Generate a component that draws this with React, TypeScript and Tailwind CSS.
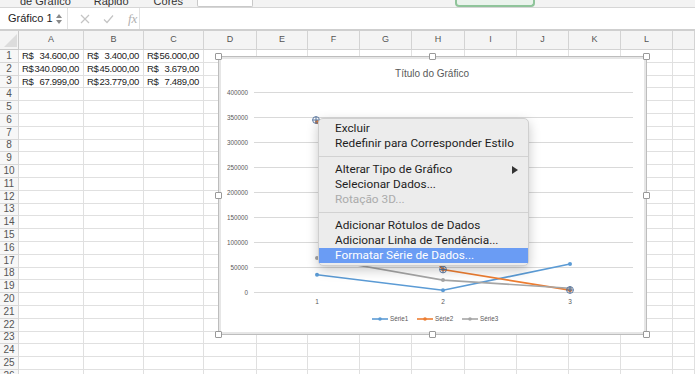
import React from "react";

const COLS = ["A", "B", "C", "D", "E", "F", "G", "H", "I", "J", "K", "L", ""];
const ROWS = Array.from({ length: 26 }, (_, i) => i + 1);
const DATA: Record<number, string[]> = {
    1: ["34.600,00", "3.400,00", "56.000,00"],
    2: ["340.090,00", "45.000,00", "3.679,00"],
    3: ["67.999,00", "23.779,00", "7.489,00"],
};

const XS = [317, 443, 570];
const toY = (v: number) => 292 - v / 2000;
const SERIES = [
    { name: "Série1", color: "#5b9bd5", values: [34600, 3400, 56000] },
    { name: "Série2", color: "#ed7d31", values: [340090, 45000, 3679] },
    { name: "Série3", color: "#a5a5a5", values: [67999, 23779, 7489] },
];

const Ribbon = () => (
    <div className="flex h-[8px] items-end overflow-hidden border-b border-[#d6d6d6] bg-[#f3f3f3] text-[11px] leading-[14px] text-[#333]">
        <span className="ml-[20px] -mb-[1px]">de Gráfico</span>
        <span className="ml-[23px] -mb-[1px]">Rápido</span>
        <span className="ml-[25px] -mb-[1px]">Cores</span>
        <div className="ml-[14px] h-[8px] w-[56px] rounded-b-[2px] border border-t-0 border-[#c9c9c9] bg-white" />
        <div className="ml-[202px] h-[8px] w-[80px] rounded-b-[4px] border-2 border-t-0 border-[#8fc49a] bg-[#eaf3ec]" />
    </div>
);

const FormulaBar = () => (
    <div className="flex h-[23px] items-center border-b-2 border-[#cfcfcf] bg-white">
        <div className="flex h-full w-[68px] items-center justify-between border-r border-[#e2e2e2] pl-[8px] pr-[5px]">
            <span className="text-[11px] text-[#222]">Gráfico 1</span>
            <div className="flex flex-col items-center gap-[2px]">
                <svg width="6" height="4" viewBox="0 0 6 4">
                    <path d="M3 0 L6 4 L0 4 Z" fill="#8a8a8a" />
                </svg>
                <svg width="6" height="4" viewBox="0 0 6 4">
                    <path d="M0 0 L6 0 L3 4 Z" fill="#8a8a8a" />
                </svg>
            </div>
        </div>
        <div className="flex h-full w-[72px] items-center border-r border-[#e2e2e2] pl-[12px]">
            <svg width="10" height="10" viewBox="0 0 10 10">
                <path d="M1 1 L9 9 M9 1 L1 9" stroke="#c4c4c4" strokeWidth="1.2" />
            </svg>
            <svg className="ml-[13px]" width="11" height="10" viewBox="0 0 11 10">
                <path d="M1 5.5 L4 8.5 L10 1.5" stroke="#c4c4c4" strokeWidth="1.2" fill="none" />
            </svg>
            <span className="ml-[14px] font-['Liberation_Serif',serif] text-[13px] italic text-[#b0b0b0]">
                fx
            </span>
        </div>
        <div className="h-full flex-1" />
    </div>
);

const Sheet = () => (
    <div className="grid grid-cols-[19px_65px_60px_60px_53px_51px_52px_52px_53px_52px_52px_52px_52px_22px] grid-rows-[19px] auto-rows-[12.8px] text-[#222]">
        <div className="relative border-b border-r border-[#c9c9c9] bg-[#f4f4f4]">
            <svg className="absolute bottom-[2px] right-[1px]" width="13" height="13" viewBox="0 0 13 13">
                <path d="M13 0 L13 13 L0 13 Z" fill="#dcdcdc" />
            </svg>
        </div>
        {COLS.map((c, i) => (
            <div
                key={"h" + i}
                className="flex items-center justify-center border-b border-r border-[#d3d3d3] bg-[#f4f4f4] text-[9px] text-[#555]"
            >
                {c}
            </div>
        ))}
        {ROWS.map((r) => (
            <React.Fragment key={r}>
                <div className="flex items-center justify-center border-b border-r border-[#d8d8d8] bg-[#f7f7f7] text-[10px] leading-none text-[#555]">
                    {r}
                </div>
                {COLS.map((_, i) => {
                    const value = DATA[r]?.[i];
                    return (
                        <div
                            key={i}
                            className="flex items-center justify-between overflow-hidden border-b border-r border-[#e0e0e0] pl-[3px] pr-[4px] text-[9.5px] leading-none tracking-[-0.3px] whitespace-nowrap"
                        >
                            {value && (
                                <>
                                    <span>R$</span>
                                    <span>{value}</span>
                                </>
                            )}
                        </div>
                    );
                })}
            </React.Fragment>
        ))}
    </div>
);

const SelMarker = ({ x, y }: { x: number; y: number }) => (
    <g stroke="#4f6f9c" strokeWidth="0.9" fill="none">
        <circle cx={x} cy={y} r="3.4" />
        <path d={`M${x - 3.4} ${y} H${x + 3.4} M${x} ${y - 3.4} V${y + 3.4}`} />
    </g>
);

const Chart = () => (
    <div className="absolute left-[218px] top-[56px] h-[279px] w-[429px] border border-[#bdbdbd] bg-white shadow-[inset_0_0_0_2px_#e6e6e6]">
        <svg className="absolute left-[-1px] top-[-1px]" width="429" height="279" viewBox="218 56 429 279">
            <text x="432" y="76.5" fontSize="10" fill="#595959" textAnchor="middle" fontFamily="Liberation Sans, sans-serif">
                Título do Gráfico
            </text>
            {Array.from({ length: 9 }, (_, k) => {
                const y = 292 - k * 25;
                return (
                    <g key={k}>
                        <line x1="254" x2="633" y1={y + 0.5} y2={y + 0.5} stroke="#d9d9d9" strokeWidth="1" />
                        <text x="248" y={y + 2.5} fontSize="6.3" fill="#595959" textAnchor="end" fontFamily="Liberation Sans, sans-serif">
                            {k * 50000}
                        </text>
                    </g>
                );
            })}
            {XS.map((x, i) => (
                <text key={x} x={x} y="303.5" fontSize="6.5" fill="#595959" textAnchor="middle" fontFamily="Liberation Sans, sans-serif">
                    {i + 1}
                </text>
            ))}
            {SERIES.map((s) => (
                <g key={s.name}>
                    <polyline
                        points={s.values.map((v, i) => `${XS[i]},${toY(v)}`).join(" ")}
                        fill="none"
                        stroke={s.color}
                        strokeWidth="1.6"
                    />
                    {s.values.map((v, i) => (
                        <circle key={i} cx={XS[i]} cy={toY(v)} r="2" fill={s.color} />
                    ))}
                </g>
            ))}
            <SelMarker x={316} y={120} />
            <SelMarker x={443} y={269.5} />
            <SelMarker x={570} y={290} />
            {SERIES.map((s, i) => {
                const x = 372 + i * 45;
                return (
                    <g key={"l" + s.name}>
                        <line x1={x} x2={x + 16} y1="319" y2="319" stroke={s.color} strokeWidth="1.6" />
                        <circle cx={x + 8} cy="319" r="1.8" fill={s.color} />
                        <text x={x + 18} y="321.3" fontSize="6.3" fill="#595959" fontFamily="Liberation Sans, sans-serif">
                            {s.name}
                        </text>
                    </g>
                );
            })}
        </svg>
        <div className="absolute left-[-4px] top-[-4px] h-[7px] w-[7px] rounded-[1px] border border-[#999] bg-white" />
        <div className="absolute left-[210px] top-[-4px] h-[7px] w-[7px] rounded-[1px] border border-[#999] bg-white" />
        <div className="absolute right-[-4px] top-[-4px] h-[7px] w-[7px] rounded-[1px] border border-[#999] bg-white" />
        <div className="absolute left-[-4px] top-[135px] h-[7px] w-[7px] rounded-[1px] border border-[#999] bg-white" />
        <div className="absolute right-[-4px] top-[135px] h-[7px] w-[7px] rounded-[1px] border border-[#999] bg-white" />
        <div className="absolute bottom-[-4px] left-[-4px] h-[7px] w-[7px] rounded-[1px] border border-[#999] bg-white" />
        <div className="absolute bottom-[-4px] left-[210px] h-[7px] w-[7px] rounded-[1px] border border-[#999] bg-white" />
        <div className="absolute bottom-[-4px] right-[-4px] h-[7px] w-[7px] rounded-[1px] border border-[#999] bg-white" />
    </div>
);

const MenuItem = ({
    label,
    disabled,
    active,
    submenu,
}: {
    label: string;
    disabled?: boolean;
    active?: boolean;
    submenu?: boolean;
}) => (
    <div
        className={
            "flex h-[15px] items-center justify-between pl-[16px] pr-[10px] " +
            (active ? "bg-[#6a9cf4] text-white " : "") +
            (disabled ? "text-[#ababab]" : active ? "" : "text-[#1e1e1e]")
        }
    >
        <span>{label}</span>
        {submenu && (
            <svg width="6" height="8" viewBox="0 0 6 8">
                <path d="M0 0 L6 4 L0 8 Z" fill="#333" />
            </svg>
        )}
    </div>
);

const Separator = () => (
    <div className="flex h-[11px] items-center">
        <div className="h-px w-full bg-[#d2d2d2]" />
    </div>
);

const ContextMenu = () => (
    <div className="absolute left-[318px] top-[118px] w-[211px] rounded-[5px] border border-[#cfcfcf] bg-[#ececec] py-[2px] font-['Roboto',sans-serif] text-[11.8px] leading-none shadow-[0_4px_12px_rgba(0,0,0,0.22)]">
        <MenuItem label="Excluir" />
        <MenuItem label="Redefinir para Corresponder Estilo" />
        <Separator />
        <MenuItem label="Alterar Tipo de Gráfico" submenu />
        <MenuItem label="Selecionar Dados..." />
        <MenuItem label="Rotação 3D..." disabled />
        <Separator />
        <MenuItem label="Adicionar Rótulos de Dados" />
        <MenuItem label="Adicionar Linha de Tendência..." />
        <MenuItem label="Formatar Série de Dados..." active />
    </div>
);

export default function App() {
    return (
        <div className="relative h-[374px] w-[695px] overflow-hidden bg-white font-['Liberation_Sans',sans-serif]">
            <Ribbon />
            <FormulaBar />
            <Sheet />
            <Chart />
            <ContextMenu />
        </div>
    );
}
